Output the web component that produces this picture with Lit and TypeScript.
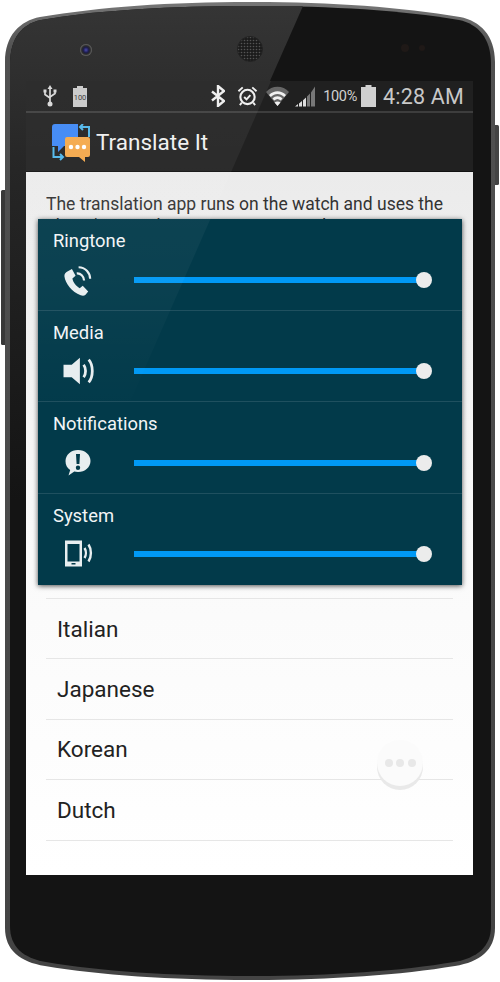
import { LitElement, html, css, svg } from "lit";
import { customElement } from "lit/decorators.js";

const icons: Record<string, unknown> = {
  ring: svg`<svg width="34" height="34" viewBox="3 0 28 28"><path fill="#e8eef0" d="M9 6.500 12 5l3 5.600-2.600 2.200c.6 3.200 3 6.400 6 7.900l2.500-1.900 4.500 4.600-2.200 2.700c-1 1-2.400 1-4 .5C12 24 6.500 17 5.800 11c-.2-2 1-3.500 3.200-4.500z"/><g fill="none" stroke="#e8eef0" stroke-width="1.800"><path d="M16 8.500c3-.3 6 2.500 6 6"/><path d="M17.500 3.500c5.500 0 9.500 4.500 9.500 9.500"/></g></svg>`,
  media: svg`<svg width="34" height="34" viewBox="1 3.500 27 27"><path fill="#e8eef0" d="M3 12h6.500L16 6.500v21L9.500 22H3z"/><g fill="none" stroke="#e8eef0" stroke-width="2.200"><path d="M19 12c2 2.800 2 7.200 0 10"/><path d="M23 8c3.800 4.500 3.800 13.500 0 18"/></g></svg>`,
  note: svg`<svg width="34" height="34" viewBox="0 0 34 34"><path fill="#e8eef0" fill-rule="evenodd" d="M17 4c7 0 12.500 4.800 12.500 11S24 26 17 26c-1.500 0-2.700-.2-3.700-.5L7.500 29.500l1.700-5.600C6 22 4.500 18.800 4.500 15 4.500 8.800 10 4 17 4zM15 8l.6 10h2.800L19 8zM17 19.500a2.200 2.200 0 1 0 0 4.400 2.200 2.200 0 0 0 0-4.400z"/></svg>`,
  sys: svg`<svg width="34" height="34" viewBox="0 0 34 34"><path fill="#e8eef0" fill-rule="evenodd" d="M4 3.500h17v26H4zM6.500 7v17.500h12V7zM10.500 26v1.500h4V26z"/><g fill="none" stroke="#e8eef0" stroke-width="2.400"><path d="M23.500 11c1.800 2.800 1.800 7.200 0 10"/><path d="M27.500 7.500c3.200 4.800 3.200 12.200 0 17"/></g></svg>`,
};

@customElement("app-root")
export class AppRoot extends LitElement {
  static styles = css`
    :host { display: block; width: 500px; height: 982px; background: #fff; font-family: Roboto, "Noto Sans", sans-serif; overflow: hidden; }
    .phone { position: relative; width: 500px; height: 982px; box-sizing: border-box; padding: 81px 27px 107px 26px; }
    .body { position: absolute; left: 0; top: 0; }
    .screen { position: relative; height: 794px; display: flex; flex-direction: column; }
    .status { height: 30px; background: #202020; border-bottom: 2px solid #3d3d3d; display: flex; align-items: center; padding: 0 9px 0 17px; color: #ccc; }
    .status svg { display: block; flex: none; }
    .bat100 { margin-left: 16px; }
    .spacer { flex: 1; }
    .bt { margin-right: 12px; }
    .alarm { margin-right: 8px; }
    .wifi { margin-right: 6px; }
    .pct { font-size: 14.500px; margin: 0 4px 0 8px; letter-spacing: -.3px; color: #d0d0d0; }
    .time { font-size: 21.500px; margin-left: 7px; color: #c8c8c8; letter-spacing: .2px; }
    .bar { height: 58px; background: #212121; display: flex; align-items: center; padding-left: 26px; gap: 5px; color: #f0f0f0; font-size: 22.500px; box-sizing: border-box; }
    .logo { margin-top: 2px; flex: none; }
    .content { flex: 1; position: relative; background: linear-gradient(#ebebeb, #fafafa 380px, #fff); overflow: hidden; padding: 21px 20px 0; border-top: 1px solid #111; }
    .para { margin: 0 0 379px; font-size: 17.500px; line-height: 22px; color: #333; height: 26px; overflow: hidden; width: 410px; white-space: nowrap; }
    .list { width: 407px; border-bottom: 1px solid #e6e6e6; }
    .row { height: 60.400px; border-top: 1px solid #e6e6e6; display: flex; align-items: center; font-size: 22.500px; color: #222; box-sizing: border-box; padding-left: 11px; }
    .dialog { position: absolute; left: 12px; top: 47px; width: 424px; height: 366px; background: #023a4a; box-shadow: 0 1px 5px rgba(0,0,0,.7); display: flex; flex-direction: column; }
    .vol { height: 91.800px; box-sizing: border-box; border-bottom: 1px solid #1f505f; color: #f2f5f6; padding: 11px 38px 0 15px; font-size: 18.400px; display: flex; flex-direction: column; gap: 11.500px; }
    .vol:last-child { border-bottom: 0; }
    .ctl { display: flex; align-items: center; height: 34px; gap: 39px; padding-left: 8px; }
    .track { flex: 1; height: 6px; background: #0099f5; position: relative; }
    .thumb { position: absolute; right: -8px; top: -5px; width: 16px; height: 16px; border-radius: 50%; background: #ececec; }
    .fab { position: absolute; left: 351px; top: 568px; width: 46px; height: 46px; border-radius: 50%; background: #fbfbfb; box-shadow: 0 4px 0 #e9e9e9; display: flex; align-items: center; justify-content: center; gap: 3.500px; }
    .fab i { width: 8px; height: 8px; border-radius: 50%; background: #e8e8e8; }
    .glare { position: absolute; left: 0; top: 0; pointer-events: none; }
  `;

  render() {
    const vols: [string, string][] = [["Ringtone", "ring"], ["Media", "media"], ["Notifications", "note"], ["System", "sys"]];
    const langs = ["Italian", "Japanese", "Korean", "Dutch"];
    return html`<div class="phone">
      <svg class="body" width="500" height="982" viewBox="0 0 500 982">
        <defs>
          <linearGradient id="edge" x1="0" y1="0" x2="0" y2="1"><stop offset="0" stop-color="#777"/><stop offset=".05" stop-color="#505050"/><stop offset=".95" stop-color="#444"/><stop offset="1" stop-color="#444"/></linearGradient>
          <linearGradient id="sheen" gradientUnits="userSpaceOnUse" x1="0" y1="6" x2="0" y2="500"><stop offset="0" stop-color="#353535"/><stop offset=".33" stop-color="#262626"/><stop offset="1" stop-color="#141414"/></linearGradient>
          <radialGradient id="lens" cx=".5" cy=".5" r=".5"><stop offset="0" stop-color="#4a4ab0"/><stop offset=".45" stop-color="#1d1d4a"/><stop offset=".7" stop-color="#2a2a2a"/><stop offset="1" stop-color="#6a6a6a"/></radialGradient>
          <pattern id="mesh" width="3" height="3" patternUnits="userSpaceOnUse"><rect width="3" height="3" fill="#1c1c1c"/><circle cx="1.500" cy="1.500" r=".8" fill="#555"/></pattern>
        </defs>
        <rect x="1" y="190" width="8" height="155" rx="1.500" fill="#383838"/>
        <rect x="491" y="125" width="8" height="60" rx="1.500" fill="#444"/>
        <path fill="url(#edge)" d="M250 2C330 2 400 7 460 17C480 21 495 35 495 62V928C495 950 480 962 455 966C400 975 330 980 250 980C170 980 100 975 45 966C20 962 5 950 5 928V62C5 35 20 21 40 17C100 7 170 2 250 2Z"/>
        <path fill="#141414" d="M250 6C330 6 400 10 459 20C478 24 491 38 491 64V926C491 947 477 958 454 962C400 971 330 976 250 976C170 976 100 971 46 962C23 958 10 947 10 926V64C10 38 22 24 41 20C100 10 170 6 250 6Z"/>
        <path fill="url(#sheen)" d="M250 6L303 6L85 500H10V64C10 38 22 24 41 20C100 10 170 6 250 6Z"/>
        <circle cx="86" cy="50" r="6" fill="url(#lens)"/>
        <circle cx="250" cy="49" r="12.500" fill="url(#mesh)"/>
        <circle cx="250" cy="49" r="12.500" fill="none" stroke="#222" stroke-width="1"/>
        <circle cx="405" cy="48" r="4" fill="#1f1917"/><circle cx="422" cy="48" r="3" fill="#1f1917"/>
      </svg>
      <div class="screen">
        <div class="status">
          <svg width="14" height="22" viewBox="0 0 14 22"><g fill="none" stroke="#d8d8d8" stroke-width="1.700"><path d="M7 3V18"/><path d="M2 7v2.500L7 13"/><path d="M12 7v1.500L7 12"/></g><path fill="#d8d8d8" d="M7 0l2.500 4h-5zM.5 4.500h3v3h-3zM10.500 4.500h3v3h-3z"/><circle cx="7" cy="19" r="2.500" fill="#d8d8d8"/></svg>
          <svg class="bat100" width="14" height="21" viewBox="0 0 14 21"><path fill="#c9c9c9" d="M4 0h6v2h4v19H0V2h4z"/><text x="7" y="14" font-size="7.500" text-anchor="middle" fill="#333" font-family="Roboto">100</text></svg>
          <span class="spacer"></span>
          <svg class="bt" width="14" height="22" viewBox="0 0 14 22"><path fill="none" stroke="#eee" stroke-width="2.400" d="M1 6.500l12 9.500-6 5V1l6 5L1 15.500"/></svg>
          <svg class="alarm" width="21" height="22" viewBox="0 0 22 22"><circle cx="11" cy="12" r="7.500" fill="none" stroke="#eee" stroke-width="2.200"/><path fill="none" stroke="#eee" stroke-width="2" d="M7.500 12l2.500 2.500 4-4.500M1.500 6L6 2M20.500 6L16 2M5 18l-2 2.500M17 18l2 2.500"/></svg>
          <svg class="wifi" width="23" height="20" viewBox="0 0 23 20"><path fill="#666" d="M0 6c6-7 17-7 23 0L11.500 20z"/><path fill="#f0f0f0" d="M3 9C8 4 15 4 20 9l-1.800 2C14 7 9 7 4.800 11zM6.500 12.500c3-3 7-3 10 0l-1.800 2c-2-2-4.400-2-6.400 0zM11.500 20l-3-3.500c2-1.500 4-1.500 6 0z"/></svg>
          <svg width="20" height="21" viewBox="0 0 20 21"><path fill="#ddd" d="M0 20.500L3 18v2.500zM4 17.500l3-2.500v5.500H4zM8 14.200l3-2.700v9H8z"/><path fill="#777" d="M12 10.500l3-3v13h-3zM16 6.500L20 .5v20h-4z"/></svg>
          <span class="pct">100%</span>
          <svg width="15" height="22" viewBox="0 0 15 22"><path fill="#d0d0d0" d="M4.500 0h6v2H15v20H0V2h4.500z"/></svg>
          <span class="time">4:28 AM</span>
        </div>
        <div class="bar">
          <svg class="logo" width="39" height="39" viewBox="0 0 39 39">
            <path fill="#3d87f5" d="M3 0h23v22H12l-6 6v-6H0V3a3 3 0 0 1 3-3z"/>
            <path fill="#f4a84a" d="M15 13h21a2 2 0 0 1 2 2v16a2 2 0 0 1-2 2h-3v5l-6-5H15a2 2 0 0 1-2-2V15a2 2 0 0 1 2-2z"/>
            <circle cx="19" cy="23" r="2.200" fill="#fff"/><circle cx="25.500" cy="23" r="2.200" fill="#fff"/><circle cx="32" cy="23" r="2.200" fill="#fff"/>
            <path fill="none" stroke="#4fb6ea" stroke-width="2" d="M28 3h9v10M31 0l-3 3 3 3M1.500 23v10h9M8 30l3 3-3 3"/>
          </svg>
          <span>Translate It</span>
        </div>
        <div class="content">
          <p class="para">The translation app runs on the watch and uses the<br />phone's speech recognition to translate text</p>
          <div class="list">${langs.map((l) => html`<div class="row">${l}</div>`)}</div>
          <div class="fab"><i></i><i></i><i></i></div>
          <div class="dialog">
            ${vols.map(([n, k]) => html`<div class="vol"><span>${n}</span><div class="ctl">${icons[k]}<div class="track"><div class="thumb"></div></div></div></div>`)}
          </div>
        </div>
        <svg class="glare" width="447" height="794" viewBox="0 0 447 794">
          <defs><linearGradient id="gl" x1="0" y1="0" x2="0" y2="1"><stop offset="0" stop-color="#fff" stop-opacity=".06"/><stop offset=".6" stop-color="#fff" stop-opacity=".035"/><stop offset="1" stop-color="#fff" stop-opacity="0"/></linearGradient></defs>
          <path fill="url(#gl)" d="M0 0H245L100 330H0z"/>
        </svg>
      </div>
    </div>`;
  }
}
